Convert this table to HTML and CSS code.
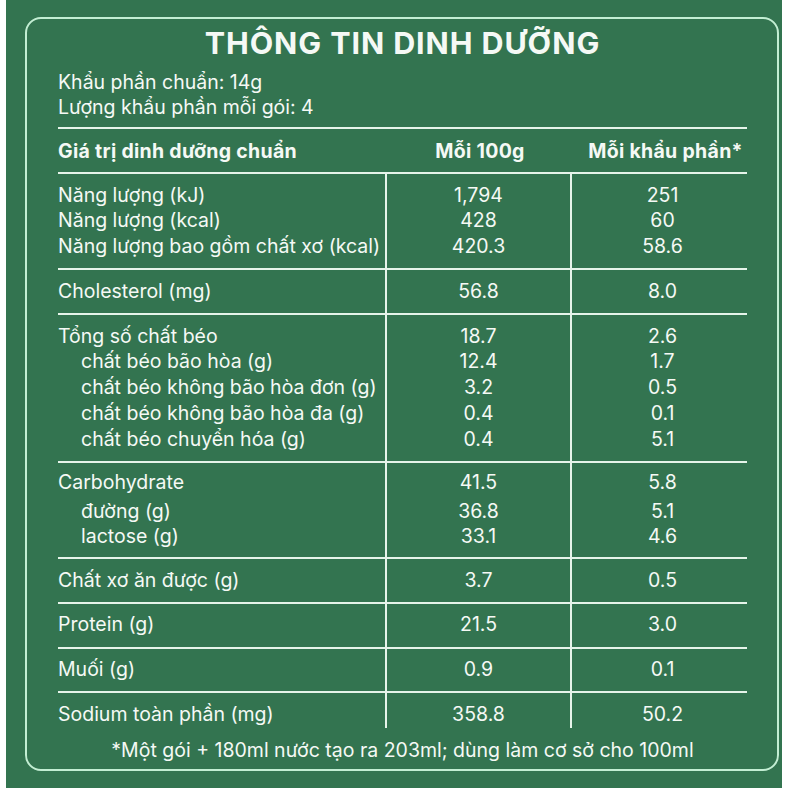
FILE: index.html
```html
<!DOCTYPE html>
<html lang="vi">
<head>
<meta charset="utf-8">
<title>Thông tin dinh dưỡng</title>
<link rel="stylesheet" href="styles.css">
</head>
<body>
<div class="page">
  <div class="card">
    <h1 class="title">THÔNG TIN DINH DƯỠNG</h1>
    <div class="serving">
      <div>Khẩu phần chuẩn: 14g</div>
      <div>Lượng khẩu phần mỗi gói: 4</div>
    </div>
    <div class="table">
      <div class="row head">
        <div class="cell name">Giá trị dinh dưỡng chuẩn</div>
        <div class="cell val per100">Mỗi 100g</div>
        <div class="cell val perserv">Mỗi khẩu phần*</div>
      </div>
      <div class="row body">
        <div class="cell name"><div>Năng lượng (kJ)</div><div>Năng lượng (kcal)</div><div>Năng lượng bao gồm chất xơ (kcal)</div></div>
        <div class="cell val per100"><div>1,794</div><div>428</div><div>420.3</div></div>
        <div class="cell val perserv"><div>251</div><div>60</div><div>58.6</div></div>
      </div>
      <div class="row body">
        <div class="cell name"><div>Cholesterol (mg)</div></div>
        <div class="cell val per100"><div>56.8</div></div>
        <div class="cell val perserv"><div>8.0</div></div>
      </div>
      <div class="row body">
        <div class="cell name"><div>Tổng số chất béo</div><div class="sub">chất béo bão hòa (g)</div><div class="sub">chất béo không bão hòa đơn (g)</div><div class="sub">chất béo không bão hòa đa (g)</div><div class="sub">chất béo chuyển hóa (g)</div></div>
        <div class="cell val per100"><div>18.7</div><div>12.4</div><div>3.2</div><div>0.4</div><div>0.4</div></div>
        <div class="cell val perserv"><div>2.6</div><div>1.7</div><div>0.5</div><div>0.1</div><div>5.1</div></div>
      </div>
      <div class="row body carb">
        <div class="cell name"><div class="lead">Carbohydrate</div><div class="sub">đường (g)</div><div class="sub">lactose (g)</div></div>
        <div class="cell val per100"><div class="lead">41.5</div><div>36.8</div><div>33.1</div></div>
        <div class="cell val perserv"><div class="lead">5.8</div><div>5.1</div><div>4.6</div></div>
      </div>
      <div class="row body">
        <div class="cell name"><div>Chất xơ ăn được (g)</div></div>
        <div class="cell val per100"><div>3.7</div></div>
        <div class="cell val perserv"><div>0.5</div></div>
      </div>
      <div class="row body">
        <div class="cell name"><div>Protein (g)</div></div>
        <div class="cell val per100"><div>21.5</div></div>
        <div class="cell val perserv"><div>3.0</div></div>
      </div>
      <div class="row body">
        <div class="cell name"><div>Muối (g)</div></div>
        <div class="cell val per100"><div>0.9</div></div>
        <div class="cell val perserv"><div>0.1</div></div>
      </div>
      <div class="row body last">
        <div class="cell name"><div>Sodium toàn phần (mg)</div></div>
        <div class="cell val per100"><div>358.8</div></div>
        <div class="cell val perserv"><div>50.2</div></div>
      </div>
    </div>
    <p class="note">*Một gói + 180ml nước tạo ra 203ml; dùng làm cơ sở cho 100ml</p>
  </div>
</div>
</body>
</html>
```
FILE: styles.css
```css
html, body {
  margin: 0;
  padding: 0;
  background: #ffffff;
}

.page {
  margin-left: 6px;
  width: 776px;
  height: 788px;
  box-sizing: border-box;
  padding: 17px 0 0 19px;
  background: #337450;
  font-family: "Inter", "Lato", "Liberation Sans", sans-serif;
  color: #f5f9f5;
}

.card {
  box-sizing: border-box;
  width: 754px;
  height: 754px;
  border: 2px solid #c3eed3;
  border-radius: 16px;
  padding: 6px 30px 0 31px;
}

.title {
  margin: 0;
  font-size: 30.5px;
  line-height: 36px;
  font-weight: 700;
  letter-spacing: 0.9px;
  text-align: center;
}

.serving {
  margin-top: 8.5px;
  font-size: 19.5px;
  line-height: 25px;
}

.table {
  margin-top: 7.5px;
  font-size: 19.5px;
  line-height: 25.75px;
}

.row {
  display: grid;
  grid-template-columns: 327px 185px 1fr;
  border-top: 2px solid #e6f4ea;
}

.cell {
  padding: 8.5px 0;
}

.head .cell {
  font-weight: 700;
  padding: 9px 0 8px;
  line-height: 26px;
  letter-spacing: 0.3px;
}

.val {
  text-align: center;
}

.body .val {
  border-left: 2px solid #e6f4ea;
}

.head .per100 {
  padding-left: 5px;
}

.head .perserv {
  padding-left: 14px;
}

.body .perserv {
  padding-left: 6px;
}

.sub {
  padding-left: 23px;
}

.carb .cell {
  padding-top: 7px;
  padding-bottom: 7px;
}

.carb .lead {
  margin-bottom: 3px;
}

.last .cell {
  padding-bottom: 0;
}

.note {
  margin: 10.5px 0 0;
  font-size: 19.5px;
  line-height: 25.75px;
  text-align: center;
}
```
